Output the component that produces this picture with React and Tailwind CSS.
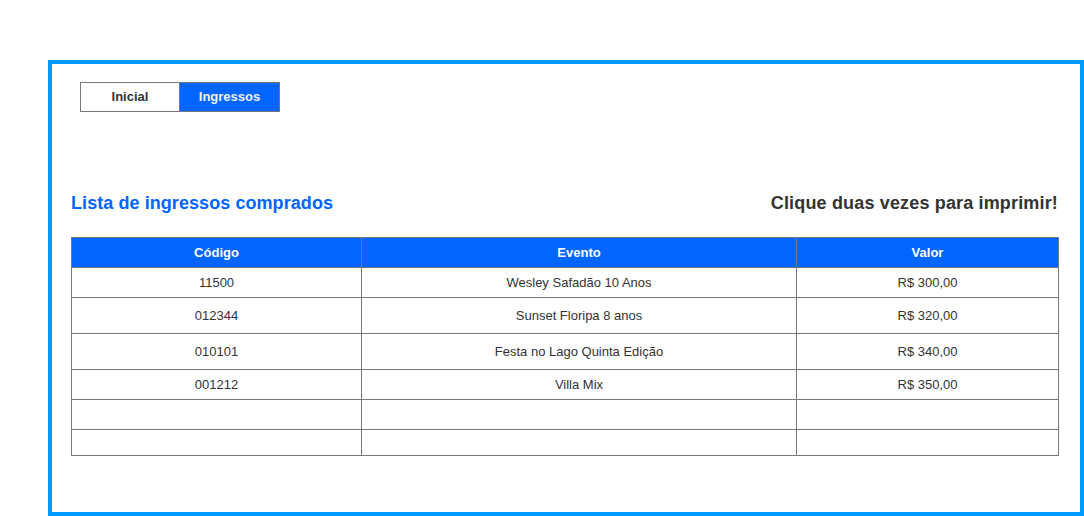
import React from "react";

const rows = [
  { codigo: "11500", evento: "Wesley Safadão 10 Anos", valor: "R$ 300,00", h: "h-[30px]" },
  { codigo: "012344", evento: "Sunset Floripa 8 anos", valor: "R$ 320,00", h: "h-[36px]" },
  { codigo: "010101", evento: "Festa no Lago Quinta Edição", valor: "R$ 340,00", h: "h-[36px]" },
  { codigo: "001212", evento: "Villa Mix", valor: "R$ 350,00", h: "h-[30px]" },
  { codigo: "", evento: "", valor: "", h: "h-[30px]" },
  { codigo: "", evento: "", valor: "", h: "h-[26px]" },
];

export default function App() {
  return (
    <div className="w-[1084px] h-[516px] bg-white overflow-hidden pt-[60px] pl-[48px] font-['Liberation_Sans',Arial,sans-serif]">
      <div className="w-[1036px] h-[456px] border-4 border-[#0099ff]">
        {/* tabs */}
        <div className="flex ml-[28px] mt-[18px]">
          <button className="w-[100px] h-[30px] border border-[#777] bg-white text-[13px] font-bold text-[#333]">
            Inicial
          </button>
          <button className="w-[100px] h-[30px] border border-l-0 border-[#777] bg-[#0066ff] text-[13px] font-bold text-[#f2f2f2]">
            Ingressos
          </button>
        </div>

        <div className="pl-[19px] pr-[21px] mt-[81px]">
          <div className="flex items-center justify-between h-[21px] text-[18px] font-bold leading-[21px]">
            <h2 className="text-[#0066ff] tracking-[0.07px]">Lista de ingressos comprados</h2>
            <p className="text-[#333] pr-px tracking-[0.16px]">Clique duas vezes para imprimir!</p>
          </div>

          <table className="mt-[23px] w-[988px] border-collapse border border-[#777] text-[13px] text-center">
            <thead>
              <tr className="h-[30px] bg-[#0066ff] text-white font-bold">
                <th className="w-[290px] border border-[#777]">Código</th>
                <th className="w-[435px] border border-[#777]">Evento</th>
                <th className="border border-[#777]">Valor</th>
              </tr>
            </thead>
            <tbody className="text-[#333]">
              {rows.map((r, i) => (
                <tr key={i} className={r.h}>
                  <td className="border border-[#777] p-0">{r.codigo}</td>
                  <td className="border border-[#777] p-0">{r.evento}</td>
                  <td className="border border-[#777] p-0">{r.valor}</td>
                </tr>
              ))}
            </tbody>
          </table>
        </div>
      </div>
    </div>
  );
}
